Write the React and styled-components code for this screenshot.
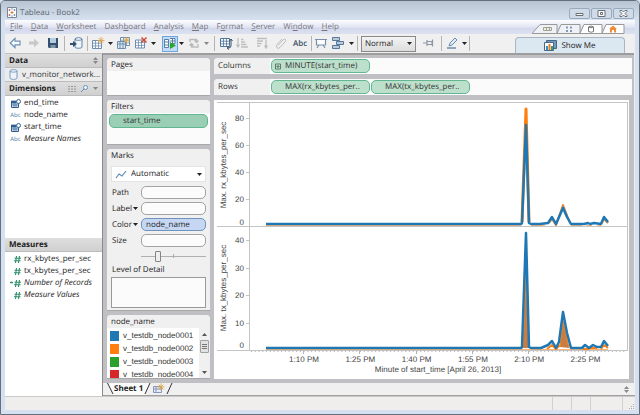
import React from "react";
import styled, { createGlobalStyle, css } from "styled-components";

const Global = createGlobalStyle`
  *, *::before, *::after { box-sizing: border-box; }
  html, body { margin: 0; padding: 0; }
  body { font-family: "Open Sans", "Noto Sans", sans-serif; font-size: 9px; line-height: 12px; color: #333; background: #d5e1f0; text-rendering: geometricPrecision; }
  button, input, select, textarea { font: inherit; color: inherit; margin: 0; padding: 0; text-rendering: inherit; }
  svg { display: block; flex: none; }
`;

const Window = styled.div`
  min-height: 100vh;
  display: flex;
  flex-direction: column;
  padding: 0 4px 4px;
  background: #d5e1f0;
  border: 1px solid #66707c;
  border-radius: 5px 5px 0 0;
  overflow: hidden;
`;

const TitleBar = styled.header`
  height: 19px;
  margin: 0 -4px;
  padding: 0 5px 0 5px;
  display: flex;
  align-items: center;
  gap: 3px;
  background: linear-gradient(#b8c4d2, #d6e2ef);
`;

const Title = styled.h1`
  margin: 4px 0 0;
  flex: 1;
  font-size: 8px;
  line-height: 12px;
  font-weight: 400;
  color: #5c6670;
`;

const AppIcon = styled.svg`
  margin-left: 1px;
  margin-top: 4px;
`;

const WindowButtons = styled.div`
  display: flex;
  gap: 1px;
  margin-top: 5px;
`;

const WindowButton = styled.button`
  width: 21px;
  height: 11px;
  display: flex;
  align-items: center;
  justify-content: center;
  border: 1px solid #9aa9bb;
  border-radius: 2px;
  background: #cfdbe9;
`;

const MenuBar = styled.div`
  height: 14px;
  display: flex;
  align-items: flex-end;
  justify-content: space-between;
  padding-right: 10px;
  background: linear-gradient(#fdfdff, #e2e6f3 50%, #d3d8ec 60%, #dde2f2);
`;

const Menu = styled.nav`
  display: flex;
  gap: 8px;
  padding-left: 5px;
`;

const MenuItem = styled.button`
  border: 0;
  background: none;
  font-size: 8px;
  line-height: 14px;
  color: #77767c;
`;

const Toolbar = styled.div`
  height: 19px;
  display: flex;
  align-items: center;
  padding: 0 10px 0 1px;
  background: #f0f0f0;
`;

const Tool = styled.button`
  width: ${(p) => p.$w || 18}px;
  height: 16px;
  display: flex;
  align-items: center;
  justify-content: center;
  border: 0;
  background: none;
  font-size: 8px;
  font-weight: 600;
  color: #3c5068;
  ${(p) => p.$active && css`
    margin-left: 6px;
    border: 1px solid #6ba5e0;
    background: #c2dcf7;
  `}
`;

const Separator = styled.span`
  width: 1px;
  height: 15px;
  margin: 0 ${(p) => p.$gap || 2}px;
  background: #b4b4b4;
`;

const SelectBox = styled.div`
  display: flex;
  align-items: center;
  gap: 4px;
  background: ${(p) => (p.$toolbar ? "linear-gradient(#f4f4f4, #dcdcdc)" : "#fff")};
  border: 1px solid ${(p) => (p.$toolbar ? "#898989" : "#e4e4e4")};
  height: 16px;
  padding: 0 3px;
  width: ${(p) => (p.$toolbar ? "55px" : "auto")};
  color: #222;
  select {
    flex: 1;
    min-width: 0;
    appearance: none;
    border: 0;
    background: none;
    outline: none;
    font-size: 8px;
    line-height: 12px;
  }
`;

const ShowMe = styled.button`
  width: 110px;
  height: 16px;
  margin-left: auto;
  align-self: flex-end;
  display: flex;
  align-items: center;
  justify-content: center;
  gap: 4px;
  border: 1px solid #a9b7c4;
  border-bottom: 0;
  border-radius: 4px 4px 0 0;
  background: #dbe7f1;
  font-size: 8px;
  color: #222;
`;

const Main = styled.main`
  flex: 1;
  display: flex;
  min-height: 0;
`;

const DataPane = styled.aside`
  flex: 0 0 98px;
  min-width: 0;
  overflow: hidden;
  display: flex;
  flex-direction: column;
  background: #fff;
  border-right: 1px solid #8a8a8a;
  border-top: 1px solid #c0c0c0;
`;

const PaneHeader = styled.h2`
  margin: 0;
  height: 14px;
  padding: 0 4px;
  display: flex;
  align-items: center;
  gap: 5px;
  font-size: 8px;
  line-height: 13px;
  font-weight: 700;
  color: #222;
  background: linear-gradient(#dedede, #d0d0d0);
  border-bottom: 1px solid #bcbcbc;
  svg:first-of-type { margin-left: auto; }
`;

const Source = styled.button`
  height: 14px;
  flex: none;
  display: flex;
  align-items: center;
  gap: 4px;
  padding: 0 4px;
  border: 0;
  background: #ececec;
  font-size: 8px;
  white-space: nowrap;
  border-bottom: 1px solid #bcbcbc;
`;

const FieldList = styled.ul`
  list-style: none;
  margin: 0;
  padding: 1px 4px 0 5px;
  min-height: ${(p) => (p.$tall ? "142px" : "0")};
`;

const FieldItem = styled.li`
  height: 12px;
  display: flex;
  align-items: center;
  gap: 3px;
  font-size: 8px;
  white-space: nowrap;
  color: #222;
  font-style: ${(p) => (p.$italic ? "italic" : "normal")};
`;

const FieldGlyph = styled.span`
  width: 11px;
  display: flex;
  justify-content: ${(p) => (p.$end ? "flex-end" : "center")};
  font-style: normal;
  font-size: 6px;
  color: #4f7ba8;
`;

const Content = styled.div`
  flex: 1;
  min-width: 0;
  display: flex;
  flex-direction: column;
  background: #f0f0f0;
`;

const Workspace = styled.section`
  flex: 1;
  display: flex;
  gap: 4px;
  margin-right: 1px;
  padding: 3px 2px 4px 4px;
  background: #bfbfc4;
  border-top: 2px solid #9d9d9d;
`;

const CardColumn = styled.div`
  flex: 0 0 103px;
  min-width: 0;
  display: flex;
  flex-direction: column;
  gap: 4px;
`;

const Card = styled.section`
  background: ${(p) => (p.$grey ? "#f0f0f0" : "#fbfbfb")};
  height: ${(p) => p.$h}px;
  border-radius: 4px 4px 0 0;
  overflow: hidden;
  border-bottom: 1px solid #a8a8a8;
`;

const CardTitle = styled.h3`
  margin: 0;
  height: 13px;
  padding-left: 4px;
  font-size: 8px;
  line-height: 13px;
  font-weight: 400;
  color: #222;
  background: #f0f0f0;
`;

const Pill = styled.button`
  display: flex;
  align-items: center;
  height: 14px;
  width: ${(p) => (p.$wide ? "calc(100% - 4px)" : "99px")};
  margin: ${(p) => (p.$wide ? "1px 2px 0" : "0")};
  padding-left: ${(p) => (p.$icon ? "3px" : "13px")};
  gap: 4px;
  border: 1px solid #62b792;
  border-radius: 5px;
  background: ${(p) => (p.$wide ? "#9bcfb5" : "#bde0cc")};
  font-size: 8px;
  line-height: 12px;
  white-space: nowrap;
`;

const MarksBody = styled.div`
  display: flex;
  flex-direction: column;
  padding: 4px 4px 0;
`;

const Encodings = styled.div`
  display: flex;
  flex-direction: column;
  gap: 3px;
  padding-top: 4px;
`;

const Encoding = styled.label`
  display: flex;
  align-items: center;
  height: 13px;
  font-size: 8px;
  color: #222;
  span { display: flex; align-items: center; gap: 1px; width: 30px; padding-left: 1px; }
`;

const EncodingInput = styled.input`
  flex: 1;
  min-width: 0;
  height: 13px;
  padding: 0 4px;
  border: 1px solid ${(p) => (p.$filled ? "#6f93bd" : "#a3a3a3")};
  border-radius: 5px;
  background: ${(p) => (p.$filled ? "#c5d7f3" : "#fbfbfb")};
  outline: none;
`;

const SizeSlider = styled.input`
  appearance: none;
  min-width: 0;
  height: 12px;
  margin: 3px 0 0 30px;
  background: linear-gradient(#aaa, #aaa) 50% 50% / 1px 4px no-repeat, linear-gradient(#b0b0b0, #b0b0b0) 0 50% / 100% 1px no-repeat;
  &::-webkit-slider-thumb {
    appearance: none;
    width: 6px;
    height: 11px;
    border: 1px solid #858585;
    border-radius: 1px;
    background: #eee;
  }
`;

const DetailLabel = styled.label`
  display: flex;
  flex-direction: column;
  gap: 1px;
  margin-top: 1px;
  font-size: 8px;
  color: #222;
  span { padding-left: 1px; line-height: 13px; }
  textarea { height: 31px; resize: none; border: 1px solid #999; background: #fbfbfb; outline: none; }
`;

const Legend = styled.div`
  display: flex;
  height: 50px;
  background: #fff;
`;

const LegendList = styled.ul`
  list-style: none;
  flex: 1;
  min-width: 0;
  margin: 0;
  padding: 1px 0 0 3px;
  overflow: hidden;
  font-family: "Liberation Sans", Arial, sans-serif;
  font-size: 8px;
`;

const LegendItem = styled.li`
  display: flex;
  align-items: center;
  gap: 4px;
  height: 13px;
`;

const Swatch = styled.i`
  width: 9px;
  height: 10px;
  background: ${(p) => p.$color};
`;

const ScrollTrack = styled.div`
  width: 11px;
  display: flex;
  flex-direction: column;
  align-items: center;
  background: #f0f0f0;
`;

const ScrollArrow = styled.button`
  width: 11px;
  height: 12px;
  display: grid;
  place-items: center;
  border: 0;
  background: none;
  &:last-child { margin-top: auto; }
`;

const ScrollThumb = styled.div`
  width: 9px;
  height: 13px;
  display: grid;
  place-items: center;
  border: 1px solid #a0a0a0;
  border-radius: 1px;
  background: #e2e2e2;
`;

const ViewColumn = styled.div`
  flex: 1;
  min-width: 0;
  display: flex;
  flex-direction: column;
`;

const Shelf = styled.div`
  display: flex;
  align-items: center;
  gap: 1px;
  height: 16px;
  margin-bottom: 5px;
  background: #fbfbfb;
  border-radius: 4px 0 0 0;
  overflow: hidden;
`;

const ShelfLabel = styled.h3`
  margin: 0;
  width: 56px;
  padding-left: 4px;
  font-size: 8px;
  line-height: 16px;
  font-weight: 400;
  color: #333;
  background: #f0f0f0;
`;

const Canvas = styled.figure`
  margin: 0 3px 0 0;
  flex: 1;
  background: #fff;
  svg { width: 100%; height: auto; }
  text { font-family: "Liberation Sans", Arial, sans-serif; font-size: 8px; fill: #444; }
`;

const SheetTabs = styled.div`
  height: 13px;
  display: flex;
  align-items: flex-start;
  padding: 0 6px 0 4px;
  border-bottom: 1px solid #a0a0a0;
`;

const SheetTab = styled.button`
  display: flex;
  align-items: center;
  height: 12px;
  border: 0;
  background: ${(p) => (p.$current ? "#fafafa" : "none")};
  font-size: 8px;
  font-weight: 700;
  color: #222;
`;

const TabsPager = styled.button`
  margin-left: auto;
  height: 12px;
  display: flex;
  align-items: center;
  border: 0;
  background: none;
`;

const StatusBar = styled.footer`
  height: 14px;
  display: flex;
  justify-content: flex-end;
  background: #f0eded;
  border-top: 1px solid #c9c9c9;
`;

const StatusCell = styled.span`
  width: ${(p) => p.$w}px;
  display: flex;
  justify-content: flex-end;
  align-items: flex-end;
  border-left: 1px solid #d2d0d0;
`;

const Caret = ({ color = "#222" }) => (
  <svg width="5" height="3" viewBox="0 0 5 3"><path d="M0 0h5L2.5 3z" fill={color} /></svg>
);

const Updown = () => (
  <svg width="5" height="7" viewBox="0 0 5 7"><path d="M2.5 0 5 3H0zM0 4h5L2.5 7z" fill="#888" /></svg>
);

const Sheet = ({ x = 0, y = 0, c = "#6d8eaf" }) => (
  <g transform={`translate(${x} ${y})`}>
    <path d="M0 0h9v8H0z" fill="#fff" stroke={c} />
    <path d="M0 2.7h9M0 5.4h9M3 0v8M6 0v8" stroke={c} strokeWidth=".8" />
  </g>
);

const Spark = ({ x, y }) => (
  <path transform={`translate(${x} ${y})`} d="M0-3.5v7M-3.5 0h7M-2.3-2.3l4.6 4.6M2.3-2.3l-4.6 4.6" stroke="#dba64c" strokeWidth=".9" />
);

const art = {
  back: <path d="M6 1 1.2 5.5 6 10V7.3h5V3.7H6z" transform="translate(0 .5)" fill="#f8fbff" stroke="#6f91b8" strokeWidth="1.2" />,
  forward: <path d="M6 1l5 4.5L6 10V7H1V4h5z" transform="translate(0 .5)" fill="#c8c8c8" />,
  save: <g><path d="M1 1h10v10H2L1 10z" fill="#35506f" /><path d="M3 1h6v5H3z" fill="#b8cce0" /><path d="M3.5 8h5v3h-5z" fill="#8296aa" /></g>,
  source: <g><path d="M5 2v8c0 1.7 7 1.7 7 0V2" fill="#eef4fa" stroke="#5e82a8" /><ellipse cx="8.5" cy="2" rx="3.5" ry="1.3" fill="#fff" stroke="#5e82a8" /><path d="M0 6h3V4l4 3-4 3V8H0z" fill="#35506f" /></g>,
  newSheet: <g><Sheet x={.5} y={3.5} /><Spark x={9} y={3.5} /></g>,
  duplicate: <g><Sheet x={3.5} y={.5} /><path d="M.5 4.5h8v7h-8z" fill="#dce7f1" stroke="#6d8eaf" /><path d="M.5 7h8M3 5v6M6 5v6" stroke="#6d8eaf" /><Spark x={9.5} y={3} /></g>,
  clear: <g><Sheet x={.5} y={3} /><path d="m6.5.5 5 5m0-5-5 5" stroke="#d84b32" strokeWidth="1.5" /></g>,
  run: <g><path d="M.5 2.5h4v8h-4zM.5 5h4M.5 8h4M6 1.5h5v5H6M8.5 2v4M6 4h5" fill="#fff" stroke="#567fa8" /><path d="m6 5 6 3.5L6 12z" fill="#2ca52b" /></g>,
  refresh: <path d="M2 5V2.5h6.5V5M6.5 3.5l2 2 2-2M10 7v3H3.5V7M5.5 8.5l-2-2-2 2" fill="none" stroke="#bababa" strokeWidth="1.4" />,
  swap: <g><Sheet x={.5} y={1.5} c="#4d7398" /><path d="M11 2v7q0 2-3 2M9.5 4 11 2l1.5 2M9 9.5 7 11l2 1.5" fill="none" stroke="#35506f" /></g>,
  sortAsc: <path d="M2 1v8M.5 7.5 2 10l1.5-2.5M5 2.5h2.5M5 5h4M5 7.5h5.5M5 10h7" fill="none" stroke="#bebebe" strokeWidth="1.3" />,
  sortDesc: <path d="M10 3v7M8.5 8.5 10 11l1.5-2.5M1 1.5h10M1 4h6M1 6.5h4.5M1 9h3" fill="none" stroke="#bebebe" strokeWidth="1.3" />,
  clip: <path d="M3 8.5 8 3q1.5-1.5 2.5-.5t-.5 2.5L5 10.5q-1.500 1.500-3 .3t0-3.300L7 2" fill="none" stroke="#bcbcbc" />,
  easel: <path d="M0 2.5h12M1.5 2.5v5.500h9V2.500M4 8l-2 3M8 8l2 3" fill="#fff" stroke="#7791ad" strokeWidth="1.2" />,
  cards: <g fill="#b9cbdd" stroke="#58789a"><path d="M.5.5h7v3h-7zM4.5 4.5h7v3h-7zM.5 8.5h7v3h-7z" /></g>,
  pin: <path d="M1 6h4M5 3v6M5 4.5h5v3H5M10.5 2.5v7" fill="none" stroke="#8d98a3" strokeWidth="1.2" />,
  pen: <g><path d="m3 9 1-3 5-5 2 2-5 5z" fill="#dfeaf5" stroke="#6b8bac" /><path d="M1 11h9" stroke="#6b8bac" strokeWidth="1.5" /></g>,
};

const Icon = ({ name }) => (
  <svg width="13" height="13" viewBox="0 0 13 13">{art[name]}</svg>
);

const DateIcon = () => (
  <svg width="10" height="9" viewBox="0 0 10 9">
    <path d="M.5 2.5h7v6h-7z" fill="#dbe8f4" stroke="#315e91" />
    <path d="M0 2h5v2H0zM1 6h6M3 4v4M5 4v4" fill="#315e91" stroke="#315e91" strokeWidth=".7" />
    <circle cx="7.5" cy="2.5" r="2" fill="#fff" stroke="#315e91" />
  </svg>
);

const HashIcon = ({ calc }) => (
  <svg width={calc ? 11 : 7} height="7" viewBox={calc ? "-4 0 11 7" : "0 0 7 7"}>
    <path d="M2.5 0 1.5 7M5.5 0l-1 7M.5 2.3h6.500M0 4.8h6.500" stroke="#2b9069" strokeWidth="1.1" />
    {calc && <path d="M-4 2.5h3" stroke="#2b9069" strokeWidth="1.5" />}
  </svg>
);

const menuItems = [["F", "ile"], ["D", "ata"], ["W", "orksheet"], ["Dash", "oard", "b"], ["A", "nalysis"], ["M", "ap"], ["F", "rmat", "o"], ["S", "erver"], ["Wi", "dow", "n"], ["H", "elp"]];

const legend = [["v_testdb_node0001", "#1f77b4"], ["v_testdb_node0002", "#ff7f0e"], ["v_testdb_node0003", "#2ca02c"], ["v_testdb_node0004", "#d62728"]];

const hours = ["1:10 PM", "1:25 PM", "1:40 PM", "1:55 PM", "2:10 PM", "2:25 PM"];

const rxBlue = "266,224 521,224 522,223 526,125 529,223 531,224 540,224 548,223 552,217 556,224 563,208 567,217 571,224 584,224 588,223 590,224 594,223 601,224 604,217 608,222";
const txBlue = "266,348 521,348 522,347 526,233 529,347 531,348 541,348 548,345 552,341 556,348 559,342 563,312 567,333 571,348 582,348 585,345 589,348 593,345 597,347 601,347 604,341 608,346";

const Chart = () => (
  <svg viewBox="214 100 415 279" role="img" aria-label="Kilobytes per second by minute">
    <path d="M217 102.5h411M217 226.5h411M217 350.5h411M249.5 102v249M627.5 102v249" stroke="#c4c4c4" fill="none" />
    {[118, 145, 172, 199].map((y, i) => (
      <g key={y}>
        <path d={`M246 ${y + .5}h3`} stroke="#c4c4c4" />
        <text x="244" y={y + 3} textAnchor="end">{80 - 20 * i}</text>
      </g>
    ))}
    <text x="244" y="225" textAnchor="end">0</text>
    {[240, 268, 295, 323].map((y, i) => (
      <g key={y}>
        <path d={`M246 ${y + .5}h3`} stroke="#c4c4c4" />
        <text x="244" y={y + 3} textAnchor="end">{40 - 10 * i}</text>
      </g>
    ))}
    <text x="244" y="348" textAnchor="end">0</text>
    <text transform="translate(226 165) rotate(-90)" textAnchor="middle">Max. rx_kbytes_per_sec</text>
    <text transform="translate(226 288) rotate(-90)" textAnchor="middle">Max. tx_kbytes_per_sec</text>
    {Array.from({ length: 100 }, (_, i) => (
      <path key={i} d={`M${251.5 + i * 3.76} 351v1`} stroke="#b4b4b4" strokeWidth="1" />
    ))}
    {hours.map((h, i) => {
      const x = 304 + i * 56.3;
      return (
        <g key={h}>
          <path d={`M${Math.round(x) - .5} 351v3`} stroke="#b4b4b4" />
          <text x={x} y="362" textAnchor="middle">{h}</text>
        </g>
      );
    })}
    <text x="438" y="372" textAnchor="middle">Minute of start_time [April 26, 2013]</text>
    <g fill="none" strokeLinejoin="round" strokeWidth="2">
      <path d="M266 225.5h255M531 225.5h14M555 225.5h2M571 225.5h11M586 225.5h6M597 225.5h4M266 349.5h342" stroke="#ffb675" strokeWidth="1" />
      <path d="M522 222 526 109 529 222" stroke="#ff7f0e" strokeWidth="3" />
      <path d="M549 223 552 219 556 225 563 205 570 223M601 224 604 219 608 223" stroke="#d98a3a" />
      <polyline points={rxBlue} stroke="#1f77b4" strokeWidth="2.500" />
      <path d="M523 348 526 276 529 348M560 347 563 321 569 348" stroke="#ff7f0e" fill="#c97d40" strokeWidth="1" />
      <path d="M547 349 552 345 556 349 560 345M583 349h6M590 348h7M601 349 604 345 608 348" stroke="#ff7f0e" />
      <polyline points={txBlue} stroke="#1f77b4" strokeWidth="2.500" />
    </g>
  </svg>
);

export default function App() {
  return (
    <Window>
      <Global />
      <TitleBar>
        <AppIcon width="10" height="11" viewBox="0 0 10 11">
          <path d="M.5.5h9v10h-9z" fill="#fff" stroke="#7a8799" />
          <path d="M5 4v3M3.5 5.5h3" stroke="#d77b36" />
          <path d="M2.5 2v2M1.5 3h2M2.5 7v2M1.5 8h2" stroke="#b3484d" strokeWidth=".7" />
          <path d="M7.5 2v2M6.5 3h2M7.5 7v2M6.5 8h2M5 1v2M5 8v2" stroke="#557a9e" strokeWidth=".7" />
        </AppIcon>
        <Title>Tableau - Book2</Title>
        <WindowButtons>
          <WindowButton aria-label="Minimize"><svg width="9" height="7"><path d="M1 3.5h7v2H1z" fill="#f8f8f8" stroke="#6b7077" /></svg></WindowButton>
          <WindowButton aria-label="Maximize"><svg width="9" height="7"><path d="M1 .5h7v6H1zM3.5 2.5h2v2h-2z" fill="#f8f8f8" stroke="#6b7077" /></svg></WindowButton>
          <WindowButton aria-label="Close"><svg width="9" height="7"><path d="m1 .5 2 0 1.500 1.500L6 .5h2v1L6 3.500l2 2v1H6L4.500 5 3 6.500H1v-1l2-2-2-2z" fill="#f8f8f8" stroke="#6b7077" /></svg></WindowButton>
        </WindowButtons>
      </TitleBar>

      <MenuBar>
        <Menu>
          {menuItems.map(([a, b, key]) => (
            <MenuItem key={a + b}>{key ? <>{a}<u>{key}</u>{b}</> : <><u>{a}</u>{b}</>}</MenuItem>
          ))}
        </Menu>
        <svg width="93" height="10" viewBox="0 0 93 10">
          <path d="M0 9.5 8 .5h17v9zM25 9.5 29 .5h19v9z" fill="#eef1f5" stroke="#999" />
          <path d="M48 9.5 52 .5h18v9zM70 9.5 74 .5h18v9z" fill="#fff" stroke="#999" />
          <path d="M11.5 3.5h8v3h-8zM14.5 3.5v3M17.5 3.5v3" fill="none" stroke="#a2a28b" />
          <path d="M34 2.5h2v2h-2zM38 2.5h2v2h-2zM34 6h2v2h-2zM38 6h2v2h-2z" fill="#8199b1" />
          <path d="M56.5 3v4.500q3 1.500 5 0V3q-2.500-2-5 0 2.500 1.500 5 0" fill="#fff" stroke="#777" />
          <path d="m81 1.500 4 3.500h-1v3.500h-2V6h-2v2.500h-2V5h-1z" fill="#ee8d3c" />
        </svg>
      </MenuBar>

      <Toolbar>
        <Tool aria-label="Undo"><Icon name="back" /></Tool>
        <Tool $w={20} aria-label="Redo"><Icon name="forward" /></Tool>
        <Tool aria-label="Save"><Icon name="save" /></Tool>
        <Separator />
        <Tool aria-label="Connect to data"><Icon name="source" /></Tool>
        <Separator />
        <Tool $w={17} aria-label="New worksheet"><Icon name="newSheet" /></Tool>
        <Tool $w={6} aria-label="New worksheet options"><Caret /></Tool>
        <Tool $w={20} aria-label="Duplicate sheet"><Icon name="duplicate" /></Tool>
        <Tool $w={17} aria-label="Clear sheet"><Icon name="clear" /></Tool>
        <Tool $w={6} aria-label="Clear options"><Caret /></Tool>
        <Tool $w={16} $active aria-label="Automatic updates"><Icon name="run" /></Tool>
        <Tool $w={7} aria-label="Update options"><Caret /></Tool>
        <Tool aria-label="Run update"><Icon name="refresh" /></Tool>
        <Tool $w={6} aria-label="Run options"><Caret color="#888" /></Tool>
        <Separator $gap={5} />
        <Tool $w={12} aria-label="Swap"><Icon name="swap" /></Tool>
        <Tool $w={21} aria-label="Sort ascending"><Icon name="sortAsc" /></Tool>
        <Tool aria-label="Sort descending"><Icon name="sortDesc" /></Tool>
        <Tool $w={20} aria-label="Group"><Icon name="clip" /></Tool>
        <Tool>Abc</Tool>
        <Separator />
        <Tool $w={14} aria-label="Presentation mode"><Icon name="easel" /></Tool>
        <Tool $w={20} aria-label="View cards"><Icon name="cards" /></Tool>
        <Tool $w={6} aria-label="View cards options"><Caret /></Tool>
        <Separator $gap={3} />
        <SelectBox $toolbar>
          <select aria-label="Fit"><option>Normal</option></select>
          <Caret />
        </SelectBox>
        <Tool $w={24} aria-label="Fix axes"><Icon name="pin" /></Tool>
        <Separator $gap={1} />
        <Tool aria-label="Highlight"><Icon name="pen" /></Tool>
        <Tool $w={6} aria-label="Highlight options"><Caret /></Tool>
        <Separator />
        <ShowMe>
          <svg width="13" height="11" viewBox="0 0 13 11">
            <path d="M2.5.5h10v8h-10z" fill="#7799b9" stroke="#44678a" />
            <path d="M.5 2.5h9v8h-9z" fill="#fff" stroke="#44678a" />
            <path d="M2 6h2v4H2z" fill="#3c8ac0" /><path d="M4.500 4h2v6h-2z" fill="#ec7a2e" /><path d="M7 6h2v4H7z" fill="#3da15a" />
          </svg>
          Show Me
        </ShowMe>
      </Toolbar>

      <Main>
        <DataPane>
          <PaneHeader>Data<Updown /></PaneHeader>
          <Source>
            <svg width="9" height="11" viewBox="0 0 9 11"><path d="M1 2v7c0 1.800 7 1.800 7 0V2c0-1.800-7-1.800-7 0 0 1.500 7 1.500 7 0" fill="#edf4fc" stroke="#7b9bc0" /></svg>
            v_monitor_network...
          </Source>
          <PaneHeader>
            Dimensions
            <svg width="8" height="7"><path d="M0 1.500h8M0 4h8M0 6.500h8" stroke="#999" strokeDasharray="2 1" /></svg>
            <svg width="7" height="7"><circle cx="4.500" cy="2.500" r="2" fill="#eef7ff" stroke="#6b8fbb" /><path d="M3 4 0 7" stroke="#6b8fbb" /></svg>
            <Caret color="#888" />
          </PaneHeader>
          <FieldList $tall>
            <FieldItem><FieldGlyph><DateIcon /></FieldGlyph>end_time</FieldItem>
            <FieldItem><FieldGlyph>Abc</FieldGlyph>node_name</FieldItem>
            <FieldItem><FieldGlyph><DateIcon /></FieldGlyph>start_time</FieldItem>
            <FieldItem $italic><FieldGlyph>Abc</FieldGlyph>Measure Names</FieldItem>
          </FieldList>
          <PaneHeader>Measures</PaneHeader>
          <FieldList>
            <FieldItem><FieldGlyph $end><HashIcon /></FieldGlyph>rx_kbytes_per_sec</FieldItem>
            <FieldItem><FieldGlyph $end><HashIcon /></FieldGlyph>tx_kbytes_per_sec</FieldItem>
            <FieldItem $italic><FieldGlyph $end><HashIcon calc /></FieldGlyph>Number of Records</FieldItem>
            <FieldItem $italic><FieldGlyph $end><HashIcon /></FieldGlyph>Measure Values</FieldItem>
          </FieldList>
        </DataPane>

        <Content>
          <Workspace>
            <CardColumn>
              <Card $h={38}><CardTitle>Pages</CardTitle></Card>
              <Card $h={45}>
                <CardTitle>Filters</CardTitle>
                <Pill $wide>start_time</Pill>
              </Card>
              <Card $h={162} $grey>
                <CardTitle>Marks</CardTitle>
                <MarksBody>
                  <SelectBox>
                    <svg width="12" height="9" viewBox="0 0 12 9"><path d="M1 8 4 4l3 2 4-5" fill="none" stroke="#5e8db8" strokeWidth="1.2" /></svg>
                    <select aria-label="Mark type"><option>Automatic</option></select>
                    <Caret />
                  </SelectBox>
                  <Encodings>
                    <Encoding><span>Path</span><EncodingInput /></Encoding>
                    <Encoding><span>Label<Caret /></span><EncodingInput /></Encoding>
                    <Encoding><span>Color<Caret /></span><EncodingInput $filled defaultValue="node_name" /></Encoding>
                    <Encoding><span>Size</span><EncodingInput /></Encoding>
                  </Encodings>
                  <SizeSlider type="range" min="0" max="100" defaultValue="23" aria-label="Mark size" />
                  <DetailLabel><span>Level of Detail</span><textarea /></DetailLabel>
                </MarksBody>
              </Card>
              <Card $h={64} $grey>
                <CardTitle>node_name</CardTitle>
                <Legend>
                  <LegendList>
                    {legend.map(([name, color]) => (
                      <LegendItem key={name}><Swatch $color={color} />{name}</LegendItem>
                    ))}
                  </LegendList>
                  <ScrollTrack>
                    <ScrollArrow aria-label="Scroll up"><svg width="5" height="3"><path d="M0 3h5L2.500 0z" fill="#555" /></svg></ScrollArrow>
                    <ScrollThumb><svg width="5" height="6"><path d="M0 .5h5M0 2.500h5M0 4.500h5" stroke="#777" /></svg></ScrollThumb>
                    <ScrollArrow aria-label="Scroll down"><Caret color="#555" /></ScrollArrow>
                  </ScrollTrack>
                </Legend>
              </Card>
            </CardColumn>

            <ViewColumn>
              <Shelf>
                <ShelfLabel>Columns</ShelfLabel>
                <Pill $icon>
                  <svg width="6" height="7"><path d="M.5 1h5v5h-5zM1.500 3.500h3M3 2v3" fill="none" stroke="#5d7b6c" /></svg>
                  MINUTE(start_time)
                </Pill>
              </Shelf>
              <Shelf>
                <ShelfLabel>Rows</ShelfLabel>
                <Pill>MAX(rx_kbytes_per..</Pill>
                <Pill>MAX(tx_kbytes_per..</Pill>
              </Shelf>
              <Canvas><Chart /></Canvas>
            </ViewColumn>
          </Workspace>

          <SheetTabs>
            <SheetTab $current>
              <svg width="7" height="12"><path d="M0 0v12h6z" fill="#f0f0f0" /><path d="M.5 0 6 11" stroke="#333" /></svg>
              Sheet 1
              <svg width="8" height="12"><path d="M7 0h1v12H2z" fill="#f0f0f0" /><path d="M7 0 2 11" stroke="#333" /></svg>
            </SheetTab>
            <SheetTab aria-label="New sheet">
              <svg width="22" height="12" viewBox="0 0 22 12">
                <path d="M2.500 3.500h8v6h-8zM5 3.500v6M2.500 6h8" fill="#e7eefa" stroke="#8797bb" />
                <Spark x={10} y={4} />
                <path d="M21 0 16 11" stroke="#333" />
              </svg>
            </SheetTab>
            <TabsPager aria-label="Sheet list"><Updown /></TabsPager>
          </SheetTabs>
        </Content>
      </Main>

      <StatusBar>
        <StatusCell $w={19} />
        <StatusCell $w={19} />
        <StatusCell $w={32} />
        <StatusCell $w={13}>
          <svg width="7" height="7"><path d="M5 1.500h1M3 3.500h1M5 3.500h1M1 5.500h1M3 5.500h1M5 5.500h1" stroke="#aaa" /></svg>
        </StatusCell>
      </StatusBar>
    </Window>
  );
}
